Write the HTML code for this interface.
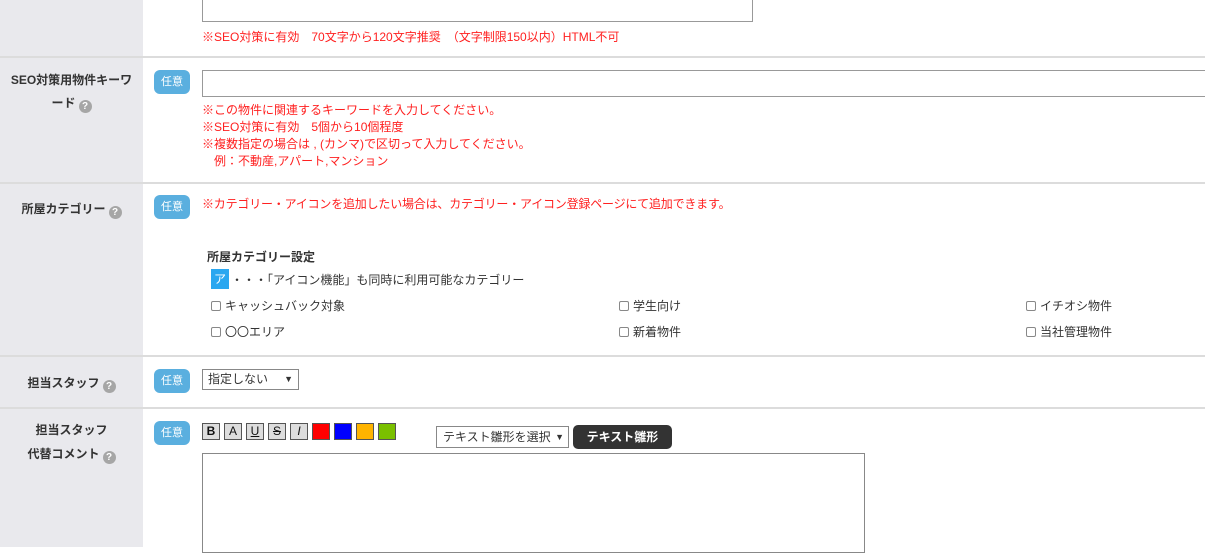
<!DOCTYPE html>
<html><head><meta charset="utf-8"><style>
*{margin:0;padding:0;box-sizing:border-box}
body{width:1205px;height:547px;overflow:hidden;background:#fff;font-family:"Liberation Sans","Noto Sans CJK JP",sans-serif;font-size:12px;color:#333;position:relative}
.a{position:absolute;white-space:nowrap}
.left{position:absolute;left:0;width:143px;background:#e9e9ed}
.hr{position:absolute;left:0;width:1205px;height:2px;background:#dcdcdc}
.lab{position:absolute;left:0;width:143px;text-align:center;font-weight:bold;font-size:12px;color:#333}
.q{display:inline-block;width:13px;height:13px;border-radius:50%;background:#a6a6a6;color:#fff;font-size:10px;line-height:13px;text-align:center;vertical-align:-2px;margin-left:3px}
.badge{position:absolute;left:154px;width:36px;height:24px;border-radius:6px;background:#5aafdf;color:#fff;font-size:11px;line-height:24px;text-align:center}
.red{color:#ff2020;font-size:12px}
.cb{display:inline-block;width:10px;height:10px;border:1px solid #888;border-radius:2px;vertical-align:-1px;margin-right:4px;background:#fff}
.tb{position:absolute;top:423px;width:18px;height:17px;border:1px solid #555;background:#ddd;font-size:12px;text-align:center;line-height:15px;color:#111}
</style></head><body>
<div class="left" style="top:0;height:547px"></div>
<div class="hr" style="top:56px"></div>
<div class="hr" style="top:182px"></div>
<div class="hr" style="top:355px"></div>
<div class="hr" style="top:407px"></div>

<div class="a" style="left:202px;top:0;width:551px;height:22px;border:1px solid #999;border-top:none"></div>
<div class="a red" style="left:202px;top:28px">※SEO対策に有効　70文字から120文字推奨　（文字制限150以内）HTML不可</div>

<div class="lab" style="top:69px;line-height:23px">SEO対策用物件キーワ<br>ード<span class="q">?</span></div>
<div class="badge" style="top:70px">任意</div>
<div class="a" style="left:202px;top:70px;width:1010px;height:27px;border:1px solid #999"></div>
<div class="a red" style="left:202px;top:102px;line-height:17px">※この物件に関連するキーワードを入力してください。<br>※SEO対策に有効　5個から10個程度<br>※複数指定の場合は , (カンマ)で区切って入力してください。<br>　例：不動産,アパート,マンション</div>

<div class="lab" style="top:200px">所屋カテゴリー<span class="q">?</span></div>
<div class="badge" style="top:195px">任意</div>
<div class="a red" style="left:202px;top:195px;letter-spacing:-0.2px">※カテゴリー・アイコンを追加したい場合は、カテゴリー・アイコン登録ページにて追加できます。</div>
<div class="a" style="left:207px;top:248px;font-weight:bold;font-size:12px">所屋カテゴリー設定</div>
<div class="a" style="left:211px;top:269px;width:18px;height:20px;background:#2aa7f0;color:#fff;text-align:center;line-height:20px">ア</div>
<div class="a" style="left:231px;top:271px">・・・「アイコン機能」も同時に利用可能なカテゴリー</div>
<div class="a" style="left:211px;top:297px"><span class="cb"></span>キャッシュバック対象</div>
<div class="a" style="left:211px;top:323px"><span class="cb"></span>〇〇エリア</div>
<div class="a" style="left:619px;top:297px"><span class="cb"></span>学生向け</div>
<div class="a" style="left:619px;top:323px"><span class="cb"></span>新着物件</div>
<div class="a" style="left:1026px;top:297px"><span class="cb"></span>イチオシ物件</div>
<div class="a" style="left:1026px;top:323px"><span class="cb"></span>当社管理物件</div>

<div class="lab" style="top:374px">担当スタッフ<span class="q">?</span></div>
<div class="badge" style="top:369px">任意</div>
<div class="a" style="left:202px;top:369px;width:97px;height:21px;border:1px solid #888;padding-left:5px;line-height:19px">指定しない <span style="position:absolute;right:5px;font-size:9px">▼</span></div>

<div class="lab" style="top:418px;line-height:24px">担当スタッフ<br>代替コメント<span class="q">?</span></div>
<div class="badge" style="top:421px">任意</div>
<div class="tb" style="left:202px;font-weight:bold">B</div>
<div class="tb" style="left:224px">A</div>
<div class="tb" style="left:246px;text-decoration:underline">U</div>
<div class="tb" style="left:268px;text-decoration:line-through">S</div>
<div class="tb" style="left:290px;font-style:italic">I</div>
<div class="tb" style="left:312px;background:#f00"></div>
<div class="tb" style="left:334px;background:#00f"></div>
<div class="tb" style="left:356px;background:#ffb400"></div>
<div class="tb" style="left:378px;background:#7ac000"></div>
<div class="a" style="left:436px;top:426px;width:133px;height:22px;border:1px solid #888;padding-left:6px;line-height:20px">テキスト雛形を選択 <span style="position:absolute;right:4px;font-size:9px">▼</span></div>
<div class="a" style="left:573px;top:425px;width:99px;height:24px;border-radius:5px;background:#333;color:#fff;font-weight:bold;text-align:center;line-height:24px">テキスト雛形</div>
<div class="a" style="left:202px;top:453px;width:663px;height:100px;border:1px solid #888"></div>
</body></html>
